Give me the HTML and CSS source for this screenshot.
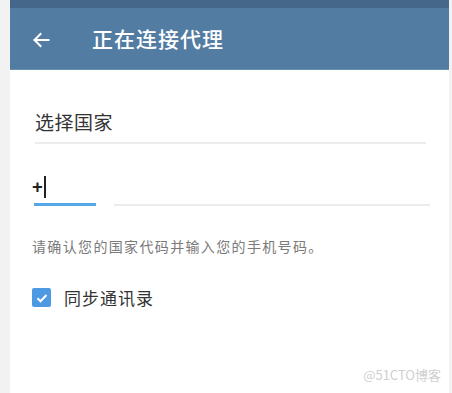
FILE: index.html
```html
<!DOCTYPE html>
<html lang="zh">
<head>
<meta charset="utf-8">
<link rel="stylesheet" href="styles.css">
</head>
<body>
<div class="phone">
  <div class="statusbar"></div>
  <header class="appbar">
    <svg class="back" width="18" height="16" viewBox="0 0 18 16"><path d="M16.5 8H2.5M8.5 2L2.5 8l6 6" fill="none" stroke="#fff" stroke-width="2" stroke-linecap="square"/></svg>
    <h1 class="title">正在连接代理</h1>
  </header>
  <main class="content">
    <div class="country">选择国家</div>
    <div class="phone-row">
      <div class="code"><span class="plus">+</span><span class="caret"></span></div>
      <div class="number"></div>
    </div>
    <p class="hint">请确认您的国家代码并输入您的手机号码。</p>
    <label class="sync">
      <span class="checkbox"><svg width="14" height="14" viewBox="0 0 14 14"><path d="M2.5 7.2l3 3 6-6.2" fill="none" stroke="#fff" stroke-width="2"/></svg></span>
      <span class="sync-label">同步通讯录</span>
    </label>
  </main>
  <div class="watermark">@51CTO博客</div>
</div>
</body>
</html>
```
FILE: styles.css
```css
html, body {
  margin: 0;
  padding: 0;
}
body {
  background: #f2f2f2;
  width: 452px;
  height: 393px;
  overflow: hidden;
  font-family: "Noto Sans CJK SC", "Noto Sans", sans-serif;
}
.phone {
  position: relative;
  margin-left: 10px;
  width: 439px;
  height: 393px;
  background: #fff;
}
.statusbar {
  height: 8px;
  background: #45688a;
}
.appbar {
  height: 62px;
  background: #527ca2;
  border-bottom: 1px solid #6a8fb2;
  display: flex;
  align-items: center;
  box-sizing: border-box;
  padding-left: 22px;
}
.back {
  display: block;
  margin-top: 2px;
}
.title {
  margin: 0 0 0 42px;
  font-size: 21px;
  font-weight: 500;
  color: #fff;
  line-height: 1;
  letter-spacing: 1px;
}
.content {
  padding: 0 0 0 22px;
}
.country {
  margin-top: 39px;
  margin-left: 3px;
  width: 391px;
  font-size: 19px;
  color: #333;
  line-height: 25px;
  letter-spacing: 0.5px;
  padding-bottom: 8px;
  border-bottom: 2px solid #ececec;
}
.phone-row {
  display: flex;
  align-items: flex-end;
  margin-top: 27px;
}
.code {
  width: 62px;
  margin-left: 2px;
  height: 32px;
  border-bottom: 3px solid #55a8e8;
  display: flex;
  align-items: center;
}
.plus {
  font-family: "Noto Sans", sans-serif;
  font-size: 19px;
  font-weight: 700;
  color: #222;
  line-height: 1;
  margin-left: -2px;
}
.caret {
  display: inline-block;
  width: 2px;
  height: 22px;
  background: #222;
  margin-left: 1px;
}
.number {
  margin-left: 18px;
  width: 316px;
  border-bottom: 2px solid #ececec;
}
.hint {
  margin: 30px 0 0 0;
  font-size: 14px;
  color: #7a7a7a;
  line-height: 20px;
  letter-spacing: 1.35px;
}
.sync {
  display: flex;
  align-items: center;
  margin-top: 29px;
}
.checkbox {
  width: 19px;
  height: 19px;
  border-radius: 2px;
  background: #4d9ae2;
  display: flex;
  align-items: center;
  justify-content: center;
}
.sync-label {
  margin-left: 13px;
  font-size: 17px;
  color: #333;
  letter-spacing: 1px;
}
.watermark {
  position: absolute;
  right: 8px;
  bottom: 9px;
  font-size: 13px;
  color: #cfcfcf;
}
```
